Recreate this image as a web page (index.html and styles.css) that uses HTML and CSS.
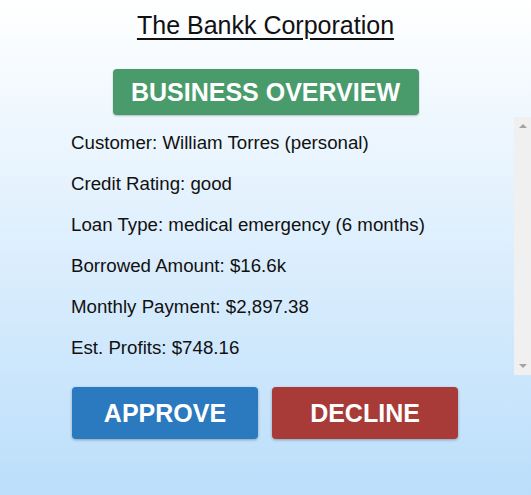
FILE: index.html
```html
<!DOCTYPE html>
<html>
<head>
<meta charset="utf-8">
<link rel="stylesheet" href="styles.css">
</head>
<body>
<h1 class="title">The Bankk Corporation</h1>
<div class="section-btn">BUSINESS OVERVIEW</div>
<div class="panel">
  <div class="details">
    <p class="row">Customer: William Torres (personal)</p>
    <p class="row">Credit Rating: good</p>
    <p class="row">Loan Type: medical emergency (6 months)</p>
    <p class="row">Borrowed Amount: $16.6k</p>
    <p class="row">Monthly Payment: $2,897.38</p>
    <p class="row">Est. Profits: $748.16</p>
  </div>
  <div class="scrollbar">
    <span class="arrow arrow-up"></span>
    <span class="arrow arrow-down"></span>
  </div>
</div>
<div class="actions">
  <button class="action approve">APPROVE</button>
  <button class="action decline">DECLINE</button>
</div>
</body>
</html>
```
FILE: styles.css
```css
html, body {
  margin: 0;
  padding: 0;
}
body {
  width: 531px;
  height: 495px;
  overflow: hidden;
  background: linear-gradient(to bottom, #ffffff 0%, #bbdefb 100%);
  font-family: "Liberation Sans", Arial, sans-serif;
  color: #111;
}
.title {
  margin: 0;
  padding-top: 11px;
  font-size: 25px;
  font-weight: normal;
  line-height: 29px;
  text-align: center;
  text-decoration: underline;
  text-underline-offset: 4px;
  text-decoration-thickness: 2px;
}
.section-btn {
  width: 306px;
  height: 46px;
  margin: 29px auto 0;
  box-sizing: border-box;
  background: #4a9b6b;
  color: #fff;
  font-weight: bold;
  font-size: 25px;
  line-height: 46px;
  text-align: center;
  border-radius: 4px;
  box-shadow: 0 1px 2px rgba(0,0,0,0.25);
}
.panel {
  display: flex;
  height: 258px;
  margin-top: 2px;
}
.details {
  flex: 1;
  padding: 5px 0 0 71px;
}
.row {
  margin: 0;
  font-size: 18.7px;
  line-height: 41px;
}
.scrollbar {
  width: 17px;
  background: #f0f0f0;
  display: flex;
  flex-direction: column;
  justify-content: space-between;
  align-items: center;
  padding: 7px 0;
  box-sizing: border-box;
}
.arrow {
  width: 0;
  height: 0;
  border-left: 4px solid transparent;
  border-right: 4px solid transparent;
}
.arrow-up {
  border-bottom: 4px solid #a3a3a3;
}
.arrow-down {
  border-top: 4px solid #a3a3a3;
}
.actions {
  display: flex;
  justify-content: center;
  gap: 14px;
  margin-top: 12px;
  padding-right: 1px;
}
.action {
  width: 186px;
  height: 52px;
  border: none;
  border-radius: 4px;
  color: #fff;
  font-family: "Liberation Sans", Arial, sans-serif;
  font-weight: bold;
  font-size: 25px;
  box-shadow: 0 1px 3px rgba(0,0,0,0.3);
  padding: 0;
}
.approve {
  background: #2b79be;
}
.decline {
  background: #a83b37;
}
```
